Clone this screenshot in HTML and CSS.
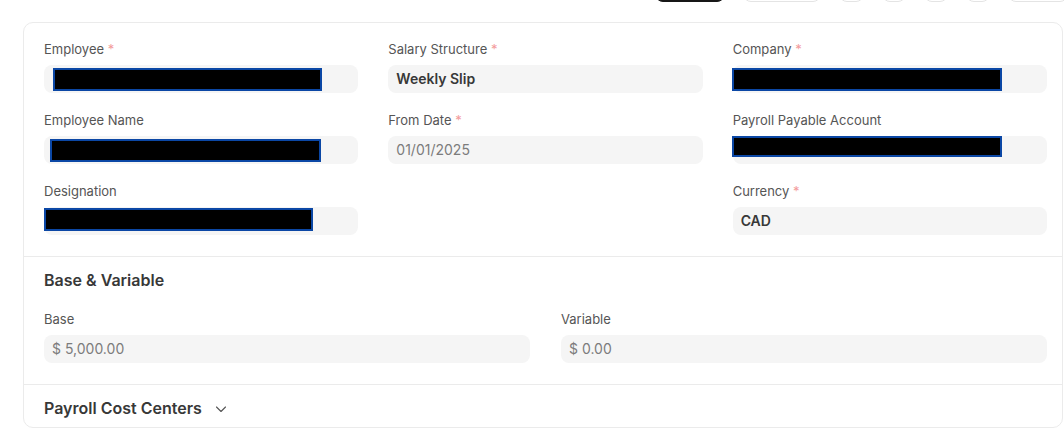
FILE: index.html
```html
<!DOCTYPE html>
<html lang="en">
<head>
  <meta charset="utf-8">
  <title>Salary Structure Assignment</title>
  <link rel="stylesheet" href="styles.css">
</head>
<body>
  <div class="toolbar">
    <span class="tb-btn primary"></span>
    <span class="tb-btn w78"></span>
    <span class="tb-btn w25"></span>
    <span class="tb-btn w24"></span>
    <span class="tb-btn w24"></span>
    <span class="tb-btn w24"></span>
    <span class="tb-btn w60"></span>
  </div>

  <div class="card">
    <div class="section">
      <div class="grid three">
        <div class="col">
          <div class="field">
            <div class="label">Employee <span class="req">*</span></div>
            <div class="input"><span class="redact r-emp"></span></div>
          </div>
          <div class="field">
            <div class="label">Employee Name</div>
            <div class="input"><span class="redact r-name"></span></div>
          </div>
          <div class="field">
            <div class="label">Designation</div>
            <div class="input"><span class="redact r-desig"></span></div>
          </div>
        </div>
        <div class="col">
          <div class="field">
            <div class="label">Salary Structure <span class="req">*</span></div>
            <div class="input strong">Weekly Slip</div>
          </div>
          <div class="field">
            <div class="label">From Date <span class="req">*</span></div>
            <div class="input muted">01/01/2025</div>
          </div>
        </div>
        <div class="col">
          <div class="field">
            <div class="label">Company <span class="req">*</span></div>
            <div class="input"><span class="redact r-comp"></span></div>
          </div>
          <div class="field">
            <div class="label">Payroll Payable Account</div>
            <div class="input"><span class="redact r-acct"></span></div>
          </div>
          <div class="field">
            <div class="label">Currency <span class="req">*</span></div>
            <div class="input strong">CAD</div>
          </div>
        </div>
      </div>
    </div>

    <div class="section sub">
      <div class="section-head">Base &amp; Variable</div>
      <div class="grid two">
        <div class="field">
          <div class="label">Base</div>
          <div class="input muted">$ 5,000.00</div>
        </div>
        <div class="field">
          <div class="label">Variable</div>
          <div class="input muted">$ 0.00</div>
        </div>
      </div>
    </div>

    <div class="section collapsed">
      <div class="section-head">
        Payroll Cost Centers
        <svg class="chevron" width="14" height="14" viewBox="0 0 14 14" fill="none">
          <path d="M2.5 5 7 9.5 11.5 5" stroke="#555" stroke-width="1.1" stroke-linecap="round" stroke-linejoin="round"/>
        </svg>
      </div>
    </div>
  </div>
</body>
</html>
```

FILE: styles.css
```css
body {
  margin: 0;
  background-color: #fff;
  font-family: Inter, "Liberation Sans", sans-serif;
  color: #383838;
  overflow: hidden;
}

.toolbar {
  display: flex;
  align-items: flex-end;
  gap: 18px;
  height: 2px;
  overflow: hidden;
  padding-left: 655px;
}

.tb-btn {
  flex: none;
  height: 32px;
  width: 24px;
  border: 1px solid #e4e4e4;
  border-radius: 8px;
  box-sizing: border-box;
}

.tb-btn.primary { width: 70px; background-color: #171717; border-color: #171717; }
.tb-btn.w78 { width: 78px; }
.tb-btn.w25 { width: 25px; }
.tb-btn.w60 { width: 60px; }

.card {
  margin: 20px 0 0 23px;
  width: 1040px;
  height: 406px;
  box-sizing: border-box;
  border: 1px solid #ebebeb;
  border-radius: 10px;
  overflow: hidden;
}

.section {
  padding: 18px 15px 21px 20px;
  border-bottom: 1px solid #ebebeb;
}

.section.sub {
  padding-top: 13px;
}

.section.collapsed {
  border-bottom: none;
  padding-top: 13px;
}

.section-head {
  display: flex;
  align-items: center;
  font-size: 16px;
  font-weight: 600;
  line-height: 20px;
  color: #383838;
  margin-bottom: 21px;
}

.collapsed .section-head {
  margin-bottom: 0;
}

.chevron {
  margin-left: 12px;
  margin-top: 2px;
}

.grid { display: grid; }
.grid.three { grid-template-columns: 1fr 1fr 1fr; column-gap: 30px; }
.grid.two { grid-template-columns: 1fr 1fr; column-gap: 31px; }

.col {
  display: flex;
  flex-direction: column;
  gap: 19px;
}

.label {
  font-size: 13px;
  line-height: 16px;
  color: #555;
  margin-bottom: 8px;
}

.req { color: #f39b9b; }

.input {
  position: relative;
  height: 28px;
  line-height: 28px;
  padding: 0 8px;
  border-radius: 8px;
  background-color: #f5f5f5;
  font-size: 14px;
  color: #383838;
}

.input.strong { font-weight: 600; }
.input.muted { color: #7c7c7c; }

.redact {
  position: absolute;
  height: 23px;
  box-sizing: border-box;
  background-color: #000;
  border: 2px solid #0b47a5;
}

.r-emp { left: 9px; top: 3px; width: 269px; }
.r-name { left: 6px; top: 3px; width: 271px; }
.r-desig { left: 0; top: 1px; width: 269px; }
.r-comp { left: -1px; top: 3px; width: 270px; }
.r-acct { left: -1px; top: 0; width: 270px; height: 21px; }
```
